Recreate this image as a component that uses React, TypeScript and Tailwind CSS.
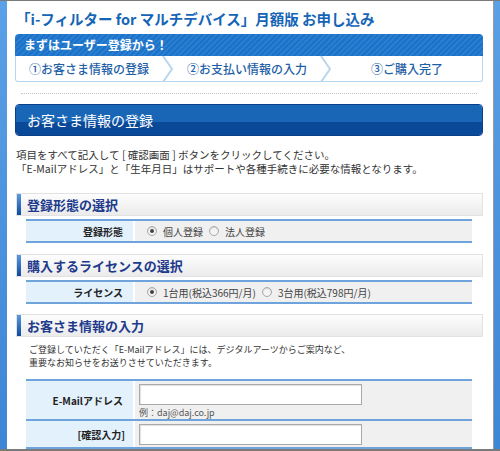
import React from "react";

const font = { fontFamily: '"Noto Sans CJK JP", "Noto Sans", sans-serif' };

function Radio({ checked }: { checked?: boolean }) {
  return (
    <span className="inline-flex h-[10px] w-[10px] items-center justify-center rounded-full border border-[#a8a8a8] bg-[#f4f4f4] shadow-[inset_0_1px_1px_rgba(0,0,0,0.15)]">
      {checked && <span className="h-[4px] w-[4px] rounded-full bg-[#444]" />}
    </span>
  );
}

function SectionHead({ children }: { children: React.ReactNode }) {
  return (
    <div className="ml-[1px] flex h-[23px] items-stretch border border-[#e2e2e2] bg-linear-to-b from-[#fdfdfd] to-[#ebebeb]">
      <div className="w-[4px] bg-linear-to-b from-[#5c9ae0] to-[#0c4aa0]" />
      <div className="flex items-center pl-[6px] text-[13px] font-bold text-[#213a8c]">{children}</div>
    </div>
  );
}

function Row({ label, children, h }: { label: string; children: React.ReactNode; h: string }) {
  return (
    <div className={`flex ${h} border-b-2 border-[#6fa3dc]`}>
      <div className="flex w-[107px] items-center justify-end bg-[#e2f1fb] pr-[10px] text-[10px] font-bold text-[#222]">
        {label}
      </div>
      <div className="ml-[2px] flex flex-1 items-center bg-[#f0f0f0] pl-[12px] text-[10px] text-[#444]">{children}</div>
    </div>
  );
}

function Chevron() {
  return (
    <svg width="12" height="26" viewBox="0 0 12 26" className="shrink-0">
      <polyline points="1,0 10,13 1,26" fill="none" stroke="#b9d6ef" strokeWidth="2" />
    </svg>
  );
}

export default function App() {
  return (
    <div style={font} className="flex h-[451px] w-[500px] border-t border-b-2 border-[#7a7a7a] bg-white">
      <div className="w-[7px] bg-linear-to-b from-[#5aa0e6] to-[#3d86d6]" />
      <div className="flex flex-1 flex-col pl-[8px] pr-[10px]">
        <h1 className="mt-[8px] h-[19px] pl-[1px] text-[14.5px] leading-[19px] font-bold text-[#1565b6]">
          「i-フィルター for マルチデバイス」月額版 お申し込み
        </h1>

        <div className="mt-[6px]">
          <div className="flex h-[22px] items-center rounded-t-[4px] bg-[repeating-linear-gradient(135deg,#1b72c8_0px,#1b72c8_2px,#2a7ed0_2px,#2a7ed0_4px)] pl-[9px] text-[12px] font-bold text-white">
            まずはユーザー登録から！
          </div>
          <div className="flex h-[26px] items-center rounded-b-[3px] border border-t-0 border-[#b9d6ef] text-[12px] font-medium text-[#1f5fa8]">
            <div className="flex flex-1 justify-center">①お客さま情報の登録</div>
            <Chevron />
            <div className="flex flex-1 justify-center">②お支払い情報の入力</div>
            <Chevron />
            <div className="flex w-[150px] justify-center">③ご購入完了</div>
          </div>
        </div>

        <div className="mx-[6px] mt-[11px] border-t border-dotted border-[#c4c4c4]" />

        <div className="relative mt-[10px] flex h-[35px] flex-col overflow-hidden rounded-[4px] border border-[#0a3f8a]">
          <div className="h-[17px] bg-[#1a66b6]" />
          <div className="flex-1 bg-[#0a4898]" />
          <span className="absolute inset-0 flex items-center pl-[11px] text-[14px] text-white">お客さま情報の登録</span>
        </div>

        <div className="mt-[12px] pl-[1px] text-[10.5px] leading-[14px] text-[#333]">
          <p>項目をすべて記入して [ 確認画面 ] ボタンをクリックしてください。</p>
          <p>「E-Mailアドレス」と「生年月日」はサポートや各種手続きに必要な情報となります。</p>
        </div>

        <div className="mt-[17px]">
          <SectionHead>登録形態の選択</SectionHead>
        </div>
        <div className="mx-[11px] mt-[3px] border-t-2 border-[#6fa3dc]">
          <Row label="登録形態" h="h-[22px]">
            <Radio checked />
            <span className="ml-[6px]">個人登録</span>
            <span className="ml-[6px]"><Radio /></span>
            <span className="ml-[6px]">法人登録</span>
          </Row>
        </div>

        <div className="mt-[11px]">
          <SectionHead>購入するライセンスの選択</SectionHead>
        </div>
        <div className="mx-[11px] mt-[3px] border-t-2 border-[#6fa3dc]">
          <Row label="ライセンス" h="h-[22px]">
            <Radio checked />
            <span className="ml-[6px]">1台用(税込366円/月)</span>
            <span className="ml-[6px]"><Radio /></span>
            <span className="ml-[6px]">3台用(税込798円/月)</span>
          </Row>
        </div>

        <div className="mt-[10px]">
          <SectionHead>お客さま情報の入力</SectionHead>
        </div>
        <div className="mt-[6px] pl-[14px] text-[9px] leading-[13px] text-[#333]">
          <p>ご登録していただく「E-Mailアドレス」には、デジタルアーツからご案内など、</p>
          <p>重要なお知らせをお送りさせていただきます。</p>
        </div>

        <div className="mx-[11px] mt-[10px] border-t-2 border-[#6fa3dc]">
          <div className="flex h-[40px] border-b-2 border-[#6fa3dc]">
            <div className="flex w-[107px] items-center justify-end bg-[#e2f1fb] pr-[10px] text-[10px] font-bold text-[#222]">
              E-Mailアドレス
            </div>
            <div className="ml-[2px] flex flex-1 flex-col bg-[#f0f0f0] pl-[4px] pt-[3px]">
              <div className="h-[21px] w-[223px] border border-[#a9a9a9] bg-white shadow-[inset_1px_1px_1px_rgba(0,0,0,0.12)]" />
              <div className="mt-[3px] text-[9px] leading-[10px] text-[#555]">例：daj@daj.co.jp</div>
            </div>
          </div>
          <div className="flex h-[28px] border-b-2 border-[#6fa3dc]">
            <div className="flex w-[107px] items-center justify-end bg-[#e2f1fb] pr-[8px] text-[10px] font-bold text-[#222]">
              [確認入力]
            </div>
            <div className="ml-[2px] flex flex-1 items-center bg-[#f0f0f0] pl-[4px]">
              <div className="h-[21px] w-[223px] border border-[#a9a9a9] bg-white shadow-[inset_1px_1px_1px_rgba(0,0,0,0.12)]" />
            </div>
          </div>
        </div>
      </div>
      <div className="w-[1px] bg-[#9a9a9a]" />
      <div className="w-[6px] bg-linear-to-b from-[#5aa0e6] to-[#3d86d6]" />
    </div>
  );
}
